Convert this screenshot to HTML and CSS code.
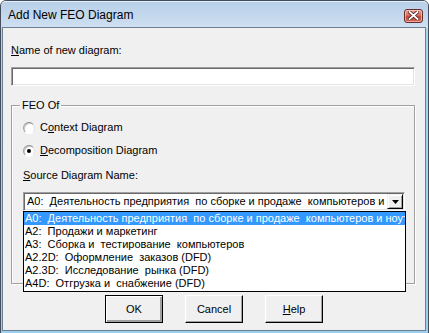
FILE: index.html
```html
<!DOCTYPE html>
<html lang="en">
<head>
    <meta charset="UTF-8">
    <title>Add New FEO Diagram</title>
    <link rel="stylesheet" href="styles.css">
</head>
<body>
    <div class="window">
        <div class="titlebar">
            <span class="title">Add New FEO Diagram</span>
            <span class="close-btn">
                <svg width="11" height="9" viewBox="0 0 11 9">
                    <path d="M1.5 1 L9.5 8 M9.5 1 L1.5 8" stroke="#5a1a1a" stroke-width="3.4" stroke-linecap="square"/>
                    <path d="M1.5 1 L9.5 8 M9.5 1 L1.5 8" stroke="#fff" stroke-width="1.8" stroke-linecap="square"/>
                </svg>
            </span>
        </div>

        <div class="client">
            <div class="label name-label"><u>N</u>ame of new diagram:</div>
            <div class="textbox"></div>

            <fieldset class="group">
                <legend>FEO Of</legend>
                <div class="radio-row">
                    <span class="radio"></span>
                    <span>C<u>o</u>ntext Diagram</span>
                </div>
                <div class="radio-row">
                    <span class="radio checked"></span>
                    <span><u>D</u>ecomposition Diagram</span>
                </div>
                <div class="label source-label"><u>S</u>ource Diagram Name:</div>

                <div class="combo">
                    <span class="combo-text">A0:  Деятельность предприятия  по сборке и продаже  компьютеров и ноутбуков</span>
                    <span class="combo-btn">
                        <svg width="7" height="4" viewBox="0 0 7 4"><path d="M0 0 H7 L3.5 4 Z" fill="#000"/></svg>
                    </span>
                    <ul class="dropdown">
                        <li class="selected">A0:  Деятельность предприятия  по сборке и продаже  компьютеров и ноутбуков</li>
                        <li>A2:  Продажи и маркетинг</li>
                        <li>A3:  Сборка и  тестирование  компьютеров</li>
                        <li>A2.2D:  Оформление  заказов (DFD)</li>
                        <li>A2.3D:  Исследование  рынка (DFD)</li>
                        <li>A4D:  Отгрузка и  снабжение (DFD)</li>
                    </ul>
                </div>
            </fieldset>

            <div class="buttons">
                <button class="btn default">OK</button>
                <button class="btn">Cancel</button>
                <button class="btn"><u>H</u>elp</button>
            </div>
        </div>
    </div>
</body>
</html>
```

FILE: styles.css
```css
* {
    margin: 0;
    padding: 0;
    box-sizing: border-box;
}

body {
    font-family: 'Liberation Sans', Arial, sans-serif;
    font-size: 11px;
    color: #000;
    background: #fff;
    overflow: hidden;
}

.window {
    width: 429px;
    height: 334px;
    display: flex;
    flex-direction: column;
    border: 1px solid #434f5c;
    border-radius: 6px 6px 0 0;
    background: linear-gradient(#b7cfe8, #cfe0f1 27px, #a8d4ee 28px, #9ccfee);
}

.titlebar {
    height: 26px;
    display: flex;
    align-items: center;
    justify-content: space-between;
    padding: 0 5px 0 7px;
    border-top: 1px solid #e3edf7;
    border-radius: 5px 5px 0 0;
}

.title {
    font-size: 12px;
    color: #000;
    padding-top: 1px;
}

.close-btn {
    width: 19px;
    height: 14px;
    margin-top: 2px;
    display: flex;
    align-items: center;
    justify-content: center;
    border: 1px solid #6b2b2b;
    border-radius: 3px;
    background: linear-gradient(#e8a493, #d0705f 45%, #c04a3a 55%, #d06a54);
    box-shadow: inset 0 0 0 1px rgba(255, 220, 210, 0.6);
}

.client {
    flex: 1;
    margin: 0 2px 2px 1px;
    border: 1px solid #6d7f92;
    background: #f0f0f0;
    padding: 16px 0 0 8px;
    position: relative;
}

.label {
    line-height: 13px;
    height: 13px;
}

.textbox {
    width: 404px;
    height: 19px;
    margin-top: 10px;
    background: #fff;
    border: 1px solid;
    border-color: #a0a0a0 #fff #fff #a0a0a0;
    box-shadow: inset 1px 1px 0 #696969, inset -1px -1px 0 #e3e3e3;
}

.group {
    width: 404px;
    height: 185px;
    margin-top: 13px;
    border: 1px solid #a0a0a0;
    box-shadow: 1px 1px 0 #fff, inset 1px 1px 0 #fff;
    padding: 0 0 0 11px;
}

.group legend {
    padding: 0 2px;
    margin-left: -3px;
    line-height: 13px;
    background: #f0f0f0;
}

.radio-row {
    display: flex;
    align-items: center;
    gap: 5px;
    height: 13px;
    line-height: 13px;
    margin-top: 9px;
}

.radio-row + .radio-row {
    margin-top: 10px;
}

.radio {
    width: 12px;
    height: 12px;
    border-radius: 50%;
    background: #fff;
    border: 1px solid;
    border-color: #8a8a8a #e0e0e0 #fff #a0a0a0;
    box-shadow: inset 1px 1px 0 #c8c8c8;
    display: flex;
    align-items: center;
    justify-content: center;
}

.radio.checked::after {
    content: '';
    width: 4px;
    height: 4px;
    border-radius: 50%;
    background: #000;
}

.source-label {
    margin-top: 12px;
}

.combo {
    position: relative;
    width: 382px;
    height: 19px;
    margin-top: 10px;
    background: #fff;
    border: 1px solid;
    border-color: #a0a0a0 #fff #fff #a0a0a0;
    box-shadow: inset 1px 1px 0 #696969, inset -1px -1px 0 #e3e3e3;
    display: flex;
    align-items: center;
    padding: 0 1px 0 3px;
}

.combo-text {
    flex: 1;
    white-space: pre;
    overflow: hidden;
    line-height: 13px;
}

.combo-btn {
    width: 16px;
    height: 15px;
    flex: none;
    display: flex;
    align-items: center;
    justify-content: center;
    background: #f0f0f0;
    border: 1px solid;
    border-color: #f0f0f0 #000 #000 #f0f0f0;
    box-shadow: inset 1px 1px 0 #fff, inset -1px -1px 0 #a0a0a0;
}

.dropdown {
    position: absolute;
    top: 18px;
    left: -1px;
    width: 383px;
    list-style: none;
    background: #fff;
    border: 1px solid #000;
    padding: 0 0 1px;
}

.dropdown li {
    height: 13px;
    line-height: 13px;
    padding-left: 1px;
    white-space: pre;
    overflow: hidden;
}

.dropdown li.selected {
    background: #3399ff;
    color: #fff;
}

.buttons {
    display: flex;
    justify-content: center;
    gap: 22px;
    margin-top: 11px;
    padding-right: 8px;
}

.btn {
    width: 58px;
    height: 28px;
    font-family: 'Liberation Sans', Arial, sans-serif;
    font-size: 11px;
    color: #000;
    background: #f0f0f0;
    border: 1px solid;
    border-color: #fff #000 #000 #fff;
    box-shadow: inset -1px -1px 0 #a0a0a0;
}

.btn.default {
    border: 1px solid #000;
    box-shadow: inset 1px 1px 0 #fff, inset -2px -2px 0 #a0a0a0, inset -1px -1px 0 #696969;
}
```
